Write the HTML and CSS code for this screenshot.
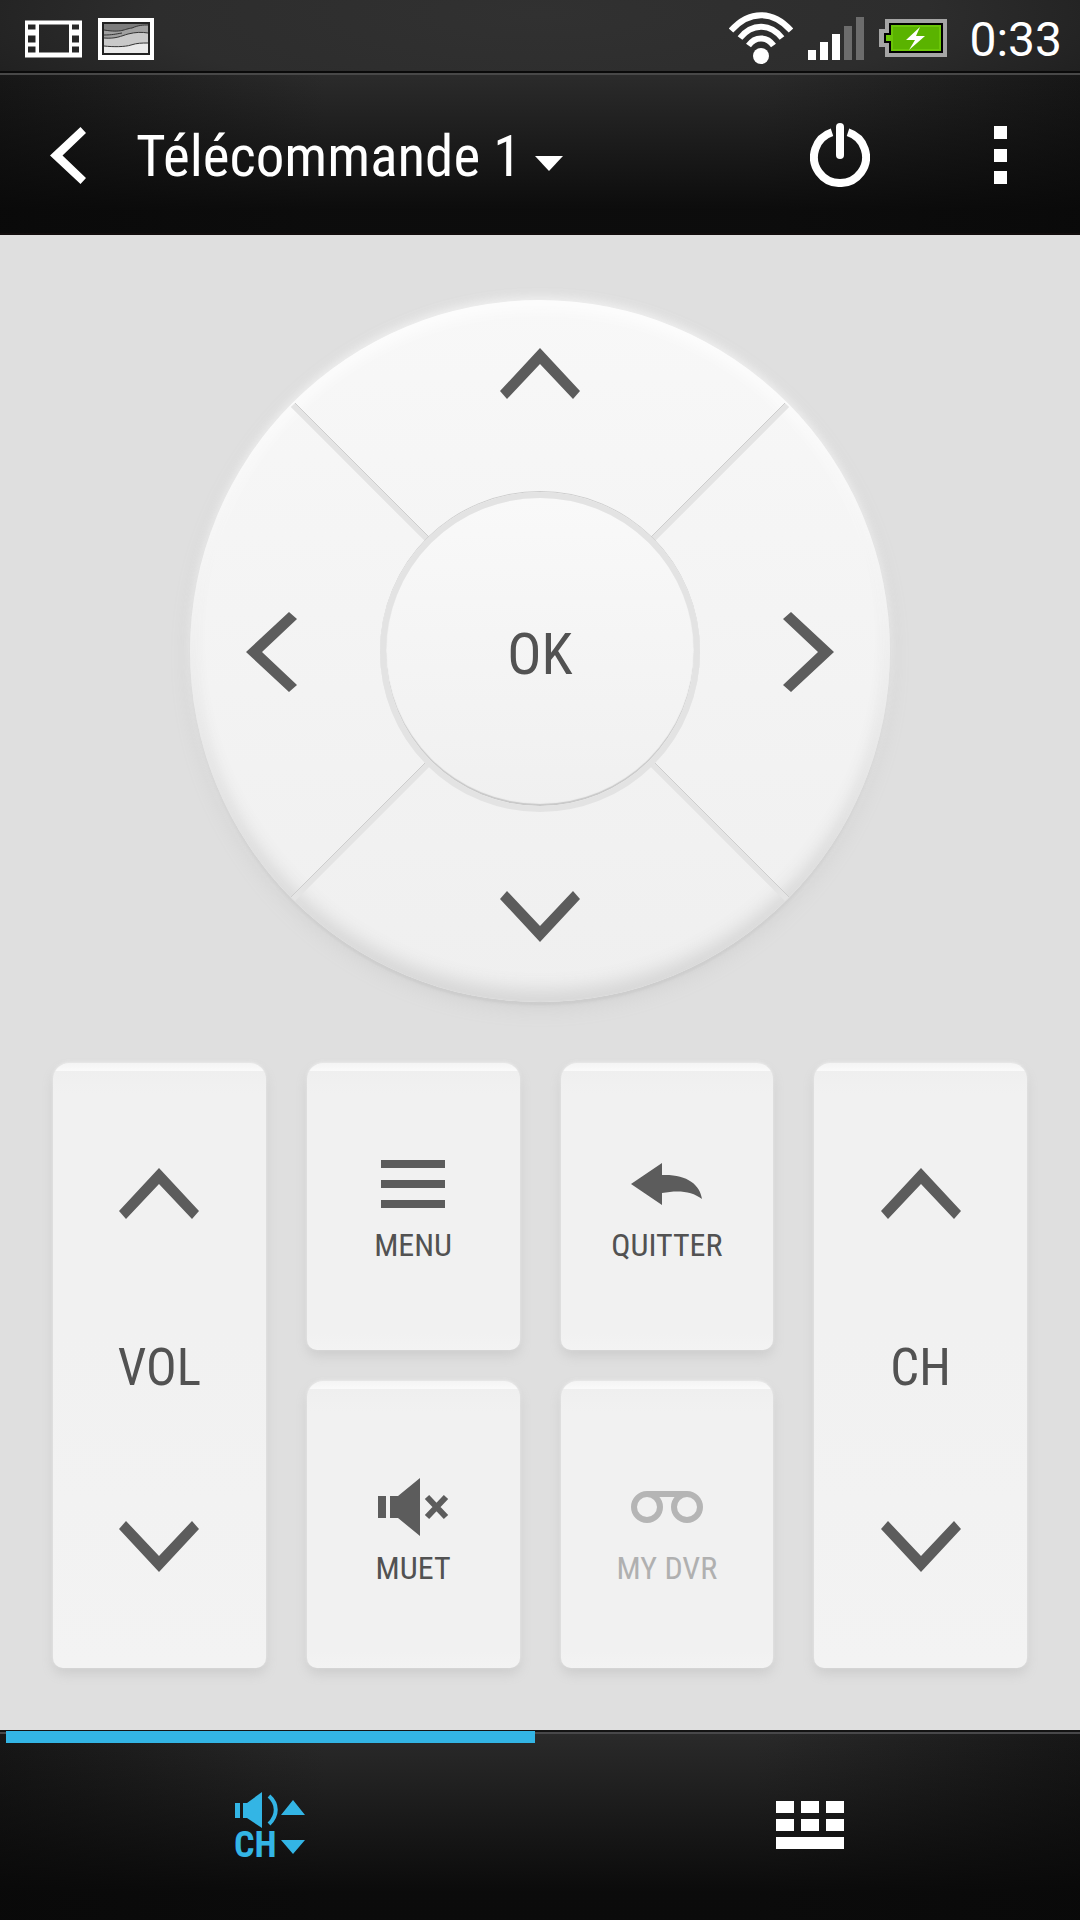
FILE: index.html
```html
<!DOCTYPE html>
<html lang="fr">
<head>
<meta charset="utf-8">
<meta name="viewport" content="width=device-width, initial-scale=1">
<title>Télécommande 1</title>
<link rel="stylesheet" href="styles.css">
</head>
<body>
<svg class="defs" aria-hidden="true">
  <symbol id="chevron" viewBox="0 0 80 51"><path d="M40 0 0 43l7 8 33-35 33 35 7-8z"/></symbol>
</svg>

<div class="status">
  <div class="status-group">
    <svg width="57" height="42" viewBox="0 0 57 42" aria-hidden="true">
      <path fill="#fff" fill-rule="evenodd" d="M0 2.500h57v37H0zM3 6.500v5h7.500v-5zM3 17.500v7h7.500v-7zM3 28.500v6h7.500v-6zM14 6.500v28h30v-28zM47 6.500v5h7v-5zM47 17.500v7h7v-7zM47 28.500v6h7v-6z"/>
    </svg>
    <svg width="56" height="42" viewBox="0 0 56 42" aria-hidden="true">
      <path fill="#fff" d="M0 0h56v42H0z"/><path fill="#222" d="M4 4h48v33H4z"/>
      <path fill="#7d7d7d" d="M6 6h44v29H6z"/>
      <path fill="#a0a0a0" d="M6 12c18 3 20-1 28-2 7-3 11-3 16-3v28H6z"/>
      <path fill="#c9c9c9" d="M6 20c12 1 17-2 24-4 8-2 14-2 20-1v20H6z"/>
      <path fill="#e9e9e9" d="M6 28c9 1 21 1 27-1 6-2 11-2 17-2v10H6z"/>
      <path fill="none" stroke="#333" d="M6 12c18 3 20-1 28-2 7-3 11-3 16-3M6 17c8 0 12-1 18-2M6 20c12 1 17-2 24-4 8-2 14-2 20-1M6 28c9 1 21 1 27-1 6-2 11-2 17-2"/>
    </svg>
  </div>
  <div class="status-group status-right">
    <svg width="64" height="54" viewBox="0 0 64 54" aria-hidden="true">
      <g fill="none" stroke="#fff" stroke-width="6"><path d="M2 19.500C20-1 44-1 62 19.500"/><path d="M11 27C23 12 41 12 53 27"/><path d="M19.500 34.500C26 25 38 25 44.500 34.500"/></g>
      <circle cx="32" cy="45" r="8" fill="#fff"/>
    </svg>
    <svg width="56" height="44" viewBox="0 0 56 44" aria-hidden="true">
      <path fill="#fff" d="M0 34h8v10H0zM12 26h8v18h-8zM24 18h8v26h-8z"/>
      <path fill="#6c6c6c" d="M36 10h8v34h-8zM48 1h8v43h-8z"/>
    </svg>
    <svg width="68" height="38" viewBox="0 0 68 38" aria-hidden="true">
      <path fill="#a5a5a5" d="M6 0h62v38H6V28H0V10h6z"/>
      <path fill="#000" d="M10 4h54v30H10V24H5V14h5z"/>
      <path fill="#6bc508" d="M12 6h50v26H12V22H7v-6h5z"/>
      <path fill="#5ab300" d="M14 8h46v22H14z"/>
      <path fill="#fff" d="M41 8 27 21h9l-6 10 16-14h-9z"/>
    </svg>
    <time class="clock">0:33</time>
  </div>
</div>

<header class="header">
  <button class="back" aria-label="Retour">
    <svg width="36" height="57" viewBox="0 0 36 57" aria-hidden="true"><path fill="#fff" d="M30.500 0 36 6 12.500 28.500 36 51l-5.500 6L0 28.500z"/></svg>
  </button>
  <label class="picker">
    <select class="picker-select" aria-label="Télécommande"><option>Télécommande 1</option></select>
    <svg class="picker-caret" width="28" height="15" viewBox="0 0 28 15" aria-hidden="true"><path fill="#fff" d="M0 0h28L14 15z"/></svg>
  </label>
  <button class="power" aria-label="Marche/arrêt">
    <svg width="60" height="64" viewBox="0 0 60 64" aria-hidden="true">
      <path fill="none" stroke="#fff" stroke-width="8" d="M22 9.300a26 26 0 1 0 16 0"/>
      <path stroke="#fff" stroke-width="8" stroke-linecap="round" d="M30 4v28"/>
    </svg>
  </button>
  <button class="more" aria-label="Plus d’options">
    <svg width="13" height="58" viewBox="0 0 13 58" aria-hidden="true"><path fill="#fff" d="M0 0h13v13H0zM0 23h13v13H0zM0 45h13v13H0z"/></svg>
  </button>
</header>

<main class="remote">
  <div class="dial">
    <svg class="dial-lines" viewBox="0 0 700 702" aria-hidden="true">
      <g stroke="#e4e4e4" stroke-width="6"><path d="M103 105 238 240M597 105 462 240M103 599 238 464M597 599 462 464"/></g>
      <g stroke="#cdcdcd"><path d="M105 103 240 238M595 103 460 238M101 597 236 462M599 597 464 462"/></g>
    </svg>
    <button class="dial-key dial-up" aria-label="Haut"><svg class="chevron"><use href="#chevron"/></svg></button>
    <button class="dial-key dial-left" aria-label="Gauche"><svg width="51" height="80" viewBox="0 0 51 80"><path d="M0 40 43 0l8 7-35 33 35 33-8 7z"/></svg></button>
    <button class="dial-ok">OK</button>
    <button class="dial-key dial-right" aria-label="Droite"><svg width="51" height="80" viewBox="0 0 51 80"><path d="M51 40 8 0 0 7l35 33L0 73l8 7z"/></svg></button>
    <button class="dial-key dial-down" aria-label="Bas"><svg class="chevron flip"><use href="#chevron"/></svg></button>
  </div>

  <div class="keys">
    <div class="plate rocker" role="group" aria-label="Volume">
      <button aria-label="Volume plus"><svg class="chevron"><use href="#chevron"/></svg></button>
      <span class="rocker-label">VOL</span>
      <button aria-label="Volume moins"><svg class="chevron flip"><use href="#chevron"/></svg></button>
    </div>
    <button class="plate key">
      <svg class="key-icon" viewBox="0 0 72 72" aria-hidden="true"><path d="M4 12h64v8H4zM4 32h64v8H4zM4 52h64v8H4z"/></svg>
      <span>MENU</span>
    </button>
    <button class="plate key">
      <svg class="key-icon" viewBox="0 0 72 72" aria-hidden="true"><path d="M0 36 31 15v12c24-1 38 9 40 24-10-8-24-9-40-6v12z"/></svg>
      <span>QUITTER</span>
    </button>
    <div class="plate rocker" role="group" aria-label="Chaîne">
      <button aria-label="Chaîne suivante"><svg class="chevron"><use href="#chevron"/></svg></button>
      <span class="rocker-label">CH</span>
      <button aria-label="Chaîne précédente"><svg class="chevron flip"><use href="#chevron"/></svg></button>
    </div>
    <button class="plate key lower">
      <svg class="key-icon" viewBox="0 0 72 72" aria-hidden="true"><path d="M1 25h8v22H1zM13 25h8L43 7v58L21 47h-8z"/><path fill="none" stroke="#5c5c5c" stroke-width="6" d="m50 26 19 20M69 26 50 46"/></svg>
      <span>MUET</span>
    </button>
    <button class="plate key lower" disabled>
      <svg class="key-icon" viewBox="0 0 72 72" aria-hidden="true"><g fill="none" stroke="#b5b5b5" stroke-width="6"><circle cx="16" cy="36" r="13"/><circle cx="56" cy="36" r="13"/><path d="M16 23h40"/></g></svg>
      <span>MY DVR</span>
    </button>
  </div>
</main>

<nav class="tabs">
  <button class="tab active" aria-label="Volume et chaînes" aria-current="page">
    <svg width="76" height="86" viewBox="-3 -6 76 86" fill="#33b5e5" aria-hidden="true">
      <path d="M0 14h5v15H0zM8 14h4L27 3v36L12 29H8z"/>
      <path fill="none" stroke="#33b5e5" stroke-width="4" d="M34 7c9 8 9 19 0 28"/>
      <path d="M46 26h24L58 11zM46 51h24L58 65z"/>
      <text class="tab-text" x="-1" y="68">CH</text>
    </svg>
  </button>
  <button class="tab" aria-label="Clavier numérique">
    <svg width="68" height="50" viewBox="0 0 68 50" fill="#fff" aria-hidden="true"><path d="M0 0h18v12H0zM25 0h18v12H25zM50 0h18v12H50zM0 18h18v12H0zM25 18h18v12H25zM50 18h18v12H50zM0 36h68v12H0z"/></svg>
  </button>
</nav>
</body>
</html>
```
FILE: styles.css
```css
* { box-sizing: border-box; }

body {
  margin: 0;
  min-height: 100vh;
  display: flex;
  flex-direction: column;
  background: #dfdfdf;
  color: #525252;
  font-family: "Roboto Condensed", "Liberation Sans Narrow", Roboto, sans-serif;
}

button, select {
  margin: 0;
  padding: 0;
  border: 0;
  background: none;
  color: inherit;
  font: inherit;
  cursor: pointer;
}

svg { display: block; }
.defs { position: absolute; width: 0; height: 0; }

.chevron { width: 80px; height: 51px; fill: #5c5c5c; }
.flip { transform: rotate(180deg); }

/* Status bar */
.status {
  display: flex;
  justify-content: space-between;
  height: 73px;
  padding: 0 18px 0 25px;
  border-bottom: 2px solid #0a0a0a;
  background: radial-gradient(ellipse 60% 200% at 50% 20%, #313131 0%, #2d2d2d 60%, #1e1e1e 100%);
}
.status-group { display: flex; align-items: center; gap: 16px; padding-top: 7px; }
.status-right { gap: 15px; padding-top: 5px; }
.clock {
  margin-left: 7px;
  padding-top: 3px;
  color: #fff;
  font: 48px/64px Roboto, sans-serif;
}

/* Title bar */
.header {
  display: flex;
  align-items: center;
  height: 162px;
  padding: 2px 73px 0 50px;
  border-top: 2px solid #484848;
  border-bottom: 2px solid #120d0d;
  background:
    linear-gradient(#08080800, #080808e0 85%),
    linear-gradient(90deg, #171717, #2b2b2b 30%, #2b2b2b 70%, #171717);
  color: #fff;
}
.picker { display: flex; align-items: center; margin: 0 auto 0 50px; gap: 13px; }
.picker-select {
  appearance: none;
  padding-top: 4px;
  font-size: 57px;
  line-height: 72px;
}
.picker-caret { margin-top: 16px; }
.more { margin-left: 124px; }

/* Remote body */
.remote {
  flex: 1;
  display: flex;
  flex-direction: column;
  align-items: center;
  gap: 61px;
  padding: 65px 53px 62px;
}

.dial {
  position: relative;
  display: grid;
  grid-template: 192px 320px 190px / 190px 320px 190px;
  border-radius: 50%;
  background: linear-gradient(#f8f8f8, #efefef);
  box-shadow:
    inset 0 10px 14px #ffffffb0,
    inset 0 -14px 18px -2px #d6d6d6,
    0 -4px 10px #f0f0f0,
    0 3px 3px #c6c6c6,
    0 6px 20px #d2d2d2;
}
.dial-lines { position: absolute; width: 100%; height: 100%; }
.dial-key { position: relative; display: flex; align-items: center; justify-content: center; fill: #5c5c5c; }
.dial-up { grid-area: 1 / 2; align-items: flex-start; padding-top: 48px; }
.dial-left { grid-area: 2 / 1; justify-content: flex-start; padding-left: 56px; }
.dial-right { grid-area: 2 / 3; justify-content: flex-end; padding-right: 56px; }
.dial-down { grid-area: 3 / 2; align-items: flex-end; padding-bottom: 60px; }
.dial-ok {
  position: relative;
  grid-area: 2 / 2;
  padding-top: 4px;
  border: 6px solid #e3e3e3;
  border-radius: 50%;
  background: linear-gradient(#f9f9f9, #f0f0f0) padding-box;
  box-shadow: inset 0 -2px 1px #c8c8c8, 0 -1px 0 #cdcdcd;
  font-size: 57px;
}

.keys {
  align-self: stretch;
  display: grid;
  grid-template-columns: repeat(4, 1fr);
  grid-auto-rows: 287px;
  gap: 31px 41px;
}
.plate {
  border-radius: 16px 16px 10px 10px;
  background: linear-gradient(#f4f4f4, #fafafa 8px, #efefef 8px, #f1f1f1 30px, #f1f1f1 270px, #f3f3f3);
  box-shadow: 0 -1px 3px #ebebeb, 0 6px 12px #cdcdcd;
}
.rocker {
  grid-row: span 2;
  display: flex;
  flex-direction: column;
  align-items: center;
  justify-content: space-between;
  padding: 105px 0 96px;
}
.rocker-label { padding-bottom: 4px; font-size: 51px; line-height: 56px; }
.key {
  display: flex;
  flex-direction: column;
  align-items: center;
  justify-content: center;
  gap: 6px;
  padding-bottom: 2px;
  font-size: 32px;
  line-height: 38px;
}
.key-icon { width: 72px; height: 72px; fill: #5c5c5c; }
.key.lower { padding-top: 10px; }
.key:disabled { color: #b0b0b0; cursor: default; }

/* Bottom tabs */
.tabs {
  display: grid;
  grid-template-columns: 1fr 1fr;
  height: 190px;
  border-top: 2px solid #141414;
  background:
    linear-gradient(#48484a 2px, #28282800 2px, #080808e8 85%),
    linear-gradient(90deg, #171717, #2a2a2a 30%, #2a2a2a 70%, #171717);
}
.tab { position: relative; display: flex; align-items: center; justify-content: center; }
.tab.active::before {
  content: "";
  position: absolute;
  top: -1px;
  left: 6px;
  right: 5px;
  height: 12px;
  background: #33b5e5;
}
.tab-text { font-size: 36px; font-weight: 700; }
```
